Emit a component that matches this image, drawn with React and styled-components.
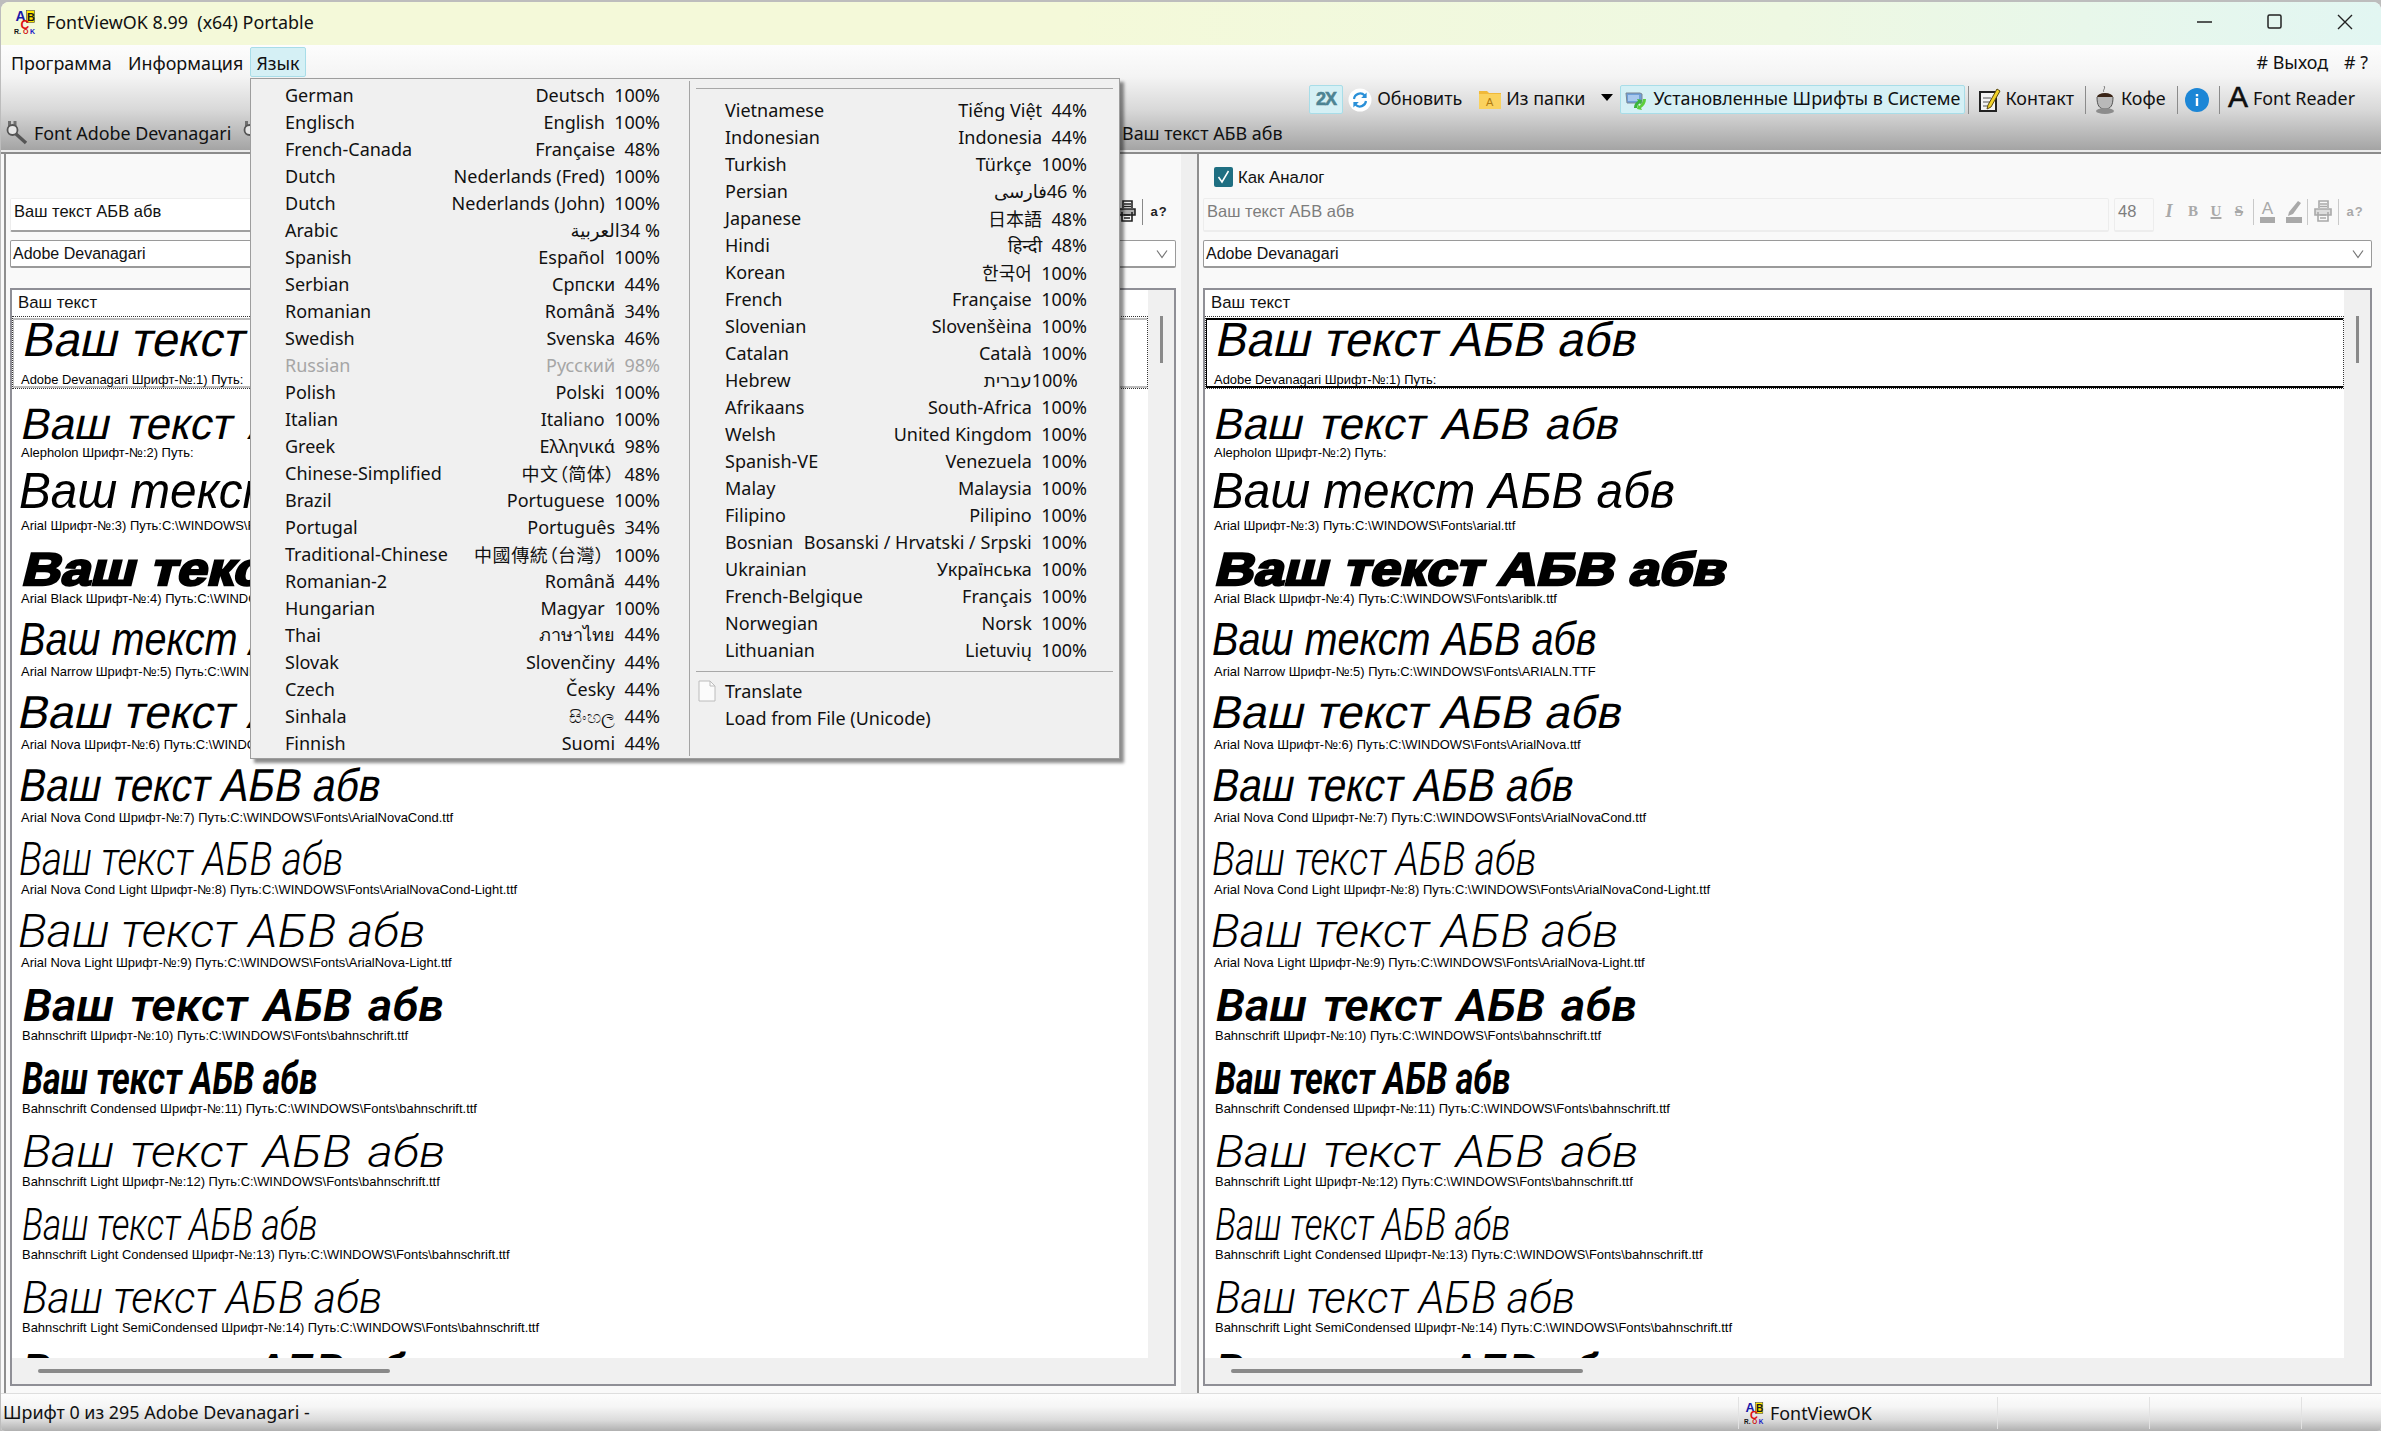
import React from 'react';
import styled, { createGlobalStyle } from 'styled-components';

const UI = '"Noto Sans", "Noto Sans CJK SC", "DejaVu Sans", sans-serif';
const ARIAL = '"Liberation Sans", Arial, sans-serif';

const Global = createGlobalStyle`
  html, body { margin: 0; padding: 0; background: #bdbdbd; overflow: hidden; }
  * { box-sizing: border-box; }
`;

const Screen = styled.div`
  position: relative;
  width: 2381px;
  height: 1431px;
  padding: 2px 0 0 1px;
  background: #bdbdbd;
  overflow: hidden;
  font-family: ${UI};
  color: #111;
`;
const Window = styled.div`
  width: 2380px;
  height: 1429px;
  display: flex;
  flex-direction: column;
  border-radius: 8px 8px 4px 4px;
  overflow: hidden;
  background: #f9f9f9;
`;

/* ---------- Title bar ---------- */
const TitleBar = styled.div`
  flex: 0 0 43px;
  display: flex;
  align-items: center;
  padding: 0 28px 3px 13px;
  background: linear-gradient(90deg, #f4f9d9 0%, #f4f9d9 45%, #eef8e2 75%, #e2f6f2 100%);
`;
const TitleText = styled.div`
  margin-left: 8px;
  font-size: 17.9px;
  white-space: pre;
`;
const WindowButtons = styled.div`
  margin-left: auto;
  display: flex;
  align-items: center;
  gap: 54px;
`;

/* ---------- Top band ---------- */
const TopBand = styled.div`
  flex: 0 0 107px;
  display: flex;
  flex-direction: column;
  background: linear-gradient(180deg, #fdfdfd 0%, #f4f4f4 30%, #d8d8d8 62%, #a4a4a4 100%);
  border-bottom: 2px solid #ececec;
`;
const MenuRow = styled.div`
  flex: 0 0 32px;
  display: flex;
  align-items: flex-start;
  padding: 2px 13px 0 9px;
  font-size: 17.9px;
`;
const MenuItem = styled.div`
  flex: 0 0 ${(p) => p.$w}px;
  height: 30px;
  line-height: 33px;
  padding: 0 1px;
  white-space: pre;
  ${(p) => p.$active && `
    text-align: center;
    background: #d5f0f5;
    border: 1px solid #a8dde8;
    border-radius: 2px;
    line-height: 31px;
  `}
`;
const MenuRight = styled.div`
  margin-left: auto;
  display: flex;
  gap: 16px;
  line-height: 31px;
  white-space: pre;
`;
const Toolbar = styled.div`
  flex: 0 0 29px;
  margin-top: 7px;
  display: flex;
  align-items: center;
  justify-content: flex-end;
  padding-right: 25px;
  font-size: 17.9px;
`;
const ToolItem = styled.div`
  flex: 0 0 ${(p) => p.$w}px;
  height: 29px;
  margin-left: ${(p) => p.$ml || 0}px;
  display: flex;
  align-items: center;
  gap: ${(p) => p.$gap ?? 5}px;
  white-space: pre;
  ${(p) => p.$on && `
    background: #d5f0f5;
    border: 1px solid #a8dde8;
    border-radius: 2px;
    padding-left: ${p.$pad ?? 4}px;
  `}
`;
const ToolLabel = styled.span`
  padding-bottom: 3px;
`;
const DoubleX = styled.span`
  width: 100%;
  text-align: center;
  font: 900 18px ${ARIAL};
  letter-spacing: -1px;
  color: #4d8392;
  -webkit-text-stroke: 0.6px #4d8392;
`;
const ToolSep = styled.div`
  flex: 0 0 1px;
  height: 28px;
  margin-left: ${(p) => p.$ml}px;
  background: #8b8b8b;
`;
const ArrowDown = styled.div`
  width: 0;
  height: 0;
  margin: 0 auto 4px;
  border-left: 6px solid transparent;
  border-right: 6px solid transparent;
  border-top: 7px solid #000;
`;
const BigA = styled.span`
  font: 400 30px/29px ${ARIAL};
  margin-top: -6px;
  -webkit-text-stroke: 0.5px #000;
`;
const TabRow = styled.div`
  flex: 0 0 26px;
  margin-top: 6px;
  display: flex;
  align-items: center;
  padding-left: 5px;
  font-size: 17.9px;
  white-space: pre;
`;
const TabLabel = styled.span`
  flex: 0 0 ${(p) => (p.$w ? `${p.$w}px` : 'auto')};
  margin-left: ${(p) => p.$ml}px;
`;
const TabIcon = styled.span`
  display: flex;
  margin-left: ${(p) => p.$ml || 0}px;
`;

/* ---------- Panes ---------- */
const Panes = styled.div`
  flex: 1;
  min-height: 0;
  display: flex;
  border-top: 2px solid #8c8c8c;
`;
const Pane = styled.div`
  flex: 0 0 auto;
  width: ${(p) => p.$w}px;
  margin-left: ${(p) => p.$ml}px;
  padding: 0 ${(p) => p.$pr}px 7px 4px;
  border-left: 2px solid #8e8e8e;
  display: flex;
  flex-direction: column;
`;
const Splitter = styled.div`
  flex: 0 0 16px;
  background: #efefef;
`;
const CheckRow = styled.div`
  flex: 0 0 44px;
  padding: 13px 0 0 11px;
  display: flex;
  align-items: flex-start;
  gap: 5px;
  font: 16.8px/21px ${ARIAL};
`;
const CheckBox = styled.div`
  width: 19px;
  height: 20px;
  border-radius: 2px;
  background: #1f6f82;
  display: flex;
  align-items: center;
  justify-content: center;
`;
const InputRow = styled.div`
  flex: 0 0 34px;
  display: flex;
  gap: 5px;
`;
const TextField = styled.div`
  flex: 1;
  min-width: 0;
  padding-left: 3px;
  font: 16.5px/24px ${ARIAL};
  white-space: pre;
  color: ${(p) => (p.$off ? '#7d7d7d' : '#111')};
  background: ${(p) => (p.$off ? '#f9f9f9' : '#fff')};
  border: 1px solid #ededed;
  border-bottom: 2px solid ${(p) => (p.$off ? '#ededed' : '#a0a0a0')};
  border-radius: 2px;
`;
const SizeField = styled(TextField)`
  flex: 0 0 40px;
`;
const FontTools = styled.div`
  flex: 0 0 213px;
  display: flex;
  align-items: flex-start;
  padding-top: 1px;
  color: ${(p) => (p.$off ? '#a9a9a9' : '#222')};
`;
const Tool = styled.div`
  flex: 0 0 ${(p) => p.$w}px;
  height: 24px;
  display: flex;
  align-items: center;
  justify-content: center;
  font: 700 15px/24px "Liberation Serif", serif;
`;
const ItalicMark = styled.span`font-style: italic; font-size: 18px;`;
const UnderMark = styled.span`text-decoration: underline; text-decoration-thickness: 2px;`;
const StrikeMark = styled.span`text-decoration: line-through; text-decoration-thickness: 2px;`;
const HelpMark = styled.span`font: 700 13px ${ARIAL}; letter-spacing: 1px;`;
const ToolBar2 = styled.div`
  flex: 0 0 1px;
  height: 26px;
  background: ${(p) => (p.$off ? '#c9c9c9' : '#888')};
`;
const ColorA = styled.span`
  display: flex;
  flex-direction: column;
  align-items: center;
  font: 400 17px/17px ${ARIAL};
  &::after { content: ''; width: 15px; height: 6px; background: currentColor; }
`;
const Combo = styled.div`
  flex: 0 0 28px;
  margin-top: 8px;
  display: flex;
  align-items: center;
  justify-content: space-between;
  padding: 0 6px 0 2px;
  background: #fff;
  border: 1px solid #9a9a9a;
  border-bottom-width: 2px;
  border-radius: 2px;
  font: 16px ${ARIAL};
`;
const FontList = styled.div`
  flex: 1;
  min-height: 0;
  margin-top: 20px;
  display: flex;
  flex-direction: column;
  background: #fff;
  border: 2px solid #8f8f96;
`;
const ListMain = styled.div`
  flex: 1;
  min-height: 0;
  display: flex;
`;
const Rows = styled.div`
  flex: 1;
  min-width: 0;
  overflow: hidden;
`;
const ListHead = styled.div`
  height: 26px;
  padding-left: 6px;
  font: 16.8px/25px ${ARIAL};
`;
const Row = styled.div`
  height: 72.93px;
  border: 1px solid transparent;
  ${(p) => p.$sel && `border: 1px dotted #333;`}
`;
const RowInner = styled.div`
  height: 70px;
  margin-top: 1px;
  border-top: 2px solid ${(p) => p.$bar || 'transparent'};
  border-bottom: 2px solid ${(p) => p.$bar || 'transparent'};
  border-left: 1px solid ${(p) => p.$bar || 'transparent'};
`;
const BigLine = styled.div`
  height: 51px;
  margin-left: ${(p) => p.$x}px;
  white-space: pre;
`;
const BigText = styled.span`
  display: inline-block;
  transform-origin: 0 100%;
  transform: scaleX(${(p) => p.$sx || 1}) skewX(${(p) => p.$skew || 0}deg);
  font-family: ${(p) => p.$fam || ARIAL};
  font-style: ${(p) => (p.$skew ? 'normal' : 'italic')};
  font-weight: ${(p) => p.$wt || 400};
  font-size: ${(p) => p.$fs}px;
  line-height: ${(p) => 2 * (p.$y - 0.3465 * p.$fs)}px;
  word-spacing: ${(p) => p.$ws || 0}px;
  color: #000;
  ${(p) => p.$stroke && `-webkit-text-stroke: ${p.$stroke}px #000;`}
`;
const SubText = styled.div`
  height: 15px;
  margin-left: ${(p) => p.$x}px;
  font: 12.95px/18px ${ARIAL};
  white-space: pre;
  color: #000;
`;
const VTrack = styled.div`
  flex: 0 0 26px;
  padding: 26px 0 0 12px;
  background: #f0f0f0;
`;
const VThumb = styled.div`
  width: 3px;
  height: 47px;
  background: #8a8a8a;
`;
const HTrack = styled.div`
  flex: 0 0 26px;
  display: flex;
  align-items: center;
  padding-left: 26px;
  background: #f0f0f0;
`;
const HThumb = styled.div`
  width: 352px;
  height: 4px;
  border-radius: 2px;
  background: #8a8a8a;
`;

/* ---------- Status bar ---------- */
const StatusBar = styled.div`
  flex: 0 0 38px;
  display: flex;
  align-items: center;
  background: linear-gradient(180deg, #fdfdfd 0%, #f5f5f5 35%, #dcdcdc 70%, #b0b0b0 100%);
  border-top: 1px solid #dedede;
  font-size: 17.9px;
  white-space: pre;
`;
const StatusText = styled.div`
  flex: 1;
  padding: 0 0 2px 2px;
`;
const StatusCell = styled.div`
  flex: 0 0 ${(p) => p.$w}px;
  height: 32px;
  display: flex;
  align-items: center;
  gap: 4px;
  padding-left: 5px;
  border-left: 1px solid #e2e2e2;
`;

/* ---------- Language menu ---------- */
const LangMenu = styled.div`
  position: absolute;
  left: 250px;
  top: 78px;
  width: 870px;
  height: 681px;
  display: flex;
  background: #f0f0f0;
  border: 1px solid #9d9d9d;
  box-shadow: 4px 4px 3px rgba(0, 0, 0, 0.45);
  font-size: 18px;
`;
const LeftColumn = styled.div`
  flex: 0 0 439px;
  margin: 2px 0;
  padding: 0 29px 0 34px;
  border-right: 1px solid #a4a4a4;
`;
const RightColumn = styled.div`
  flex: 1;
  padding-top: 9px;
`;
const MenuSep = styled.div`
  height: 1px;
  margin: ${(p) => p.$mt || 0}px 6px ${(p) => p.$mb || 0}px;
  background: #a8a8a8;
`;
const LangRows = styled.div`
  padding: 7px 32px 0 35px;
`;
const LangRow = styled.div`
  height: 27px;
  display: flex;
  justify-content: space-between;
  align-items: center;
  white-space: pre;
  color: ${(p) => (p.$dis ? '#a6a6a6' : '#111')};
`;
const NativeName = styled.bdi`
  font-feature-settings: "palt";
  letter-spacing: ${(p) => (p.$cjk ? '0.6px' : '0')};
`;
const Plain = styled.div`
  position: relative;
  height: 27px;
  line-height: 27px;
  padding-left: 35px;
`;
const DocSlot = styled.div`
  position: absolute;
  left: 8px;
  top: 2px;
`;

/* ---------- Icons ---------- */
const Logo = ({ size = 24 }) => (
  <svg width={size} height={size} viewBox="0 0 24 24" style={{ flex: 'none' }}>
    <rect x="12.5" y="0.5" width="8" height="12" fill="#ffe800" stroke="#444" strokeWidth="0.6" />
    <text x="1.5" y="11" fontFamily="Liberation Sans" fontWeight="700" fontSize="14" fill="#1818a8">A</text>
    <text x="13" y="11" fontFamily="Liberation Sans" fontWeight="700" fontSize="11" fill="#1a1a1a">B</text>
    <text x="6.5" y="18.5" fontFamily="Liberation Sans" fontWeight="700" fontSize="12" fill="#e01010">C</text>
    <text x="0" y="23.5" fontFamily="Liberation Sans" fontWeight="700" fontSize="7" fill="#111">R.</text>
    <text x="9" y="23.5" fontFamily="Liberation Sans" fontWeight="700" fontSize="7" fill="#d01010">O</text>
    <text x="16" y="23.5" fontFamily="Liberation Sans" fontWeight="700" fontSize="7" fill="#1818c8">K</text>
  </svg>
);
const Refresh = () => (
  <svg width="24" height="24" viewBox="0 0 24 24" style={{ flex: 'none' }}>
    <circle cx="12" cy="12" r="11.5" fill="#fff" />
    <path d="M6 11a6.2 6.2 0 0 1 10.6-3.6" fill="none" stroke="#2a90d8" strokeWidth="2.2" />
    <path d="M18.6 4.5v5.4h-5.4z" fill="#2a90d8" />
    <path d="M18 13a6.2 6.2 0 0 1-10.6 3.6" fill="none" stroke="#2a90d8" strokeWidth="2.2" />
    <path d="M5.4 19.5v-5.4h5.4z" fill="#2a90d8" />
  </svg>
);
const Folder = () => (
  <svg width="22" height="22" viewBox="0 0 22 22" style={{ flex: 'none' }}>
    <path d="M0 2h8l2 2h12v15H0z" fill="#f0b93a" />
    <rect x="0" y="5" width="22" height="15" fill="#fad25e" />
    <text x="7" y="17" fontFamily="Liberation Sans" fontSize="11" fill="#b07a10">A</text>
  </svg>
);
const Installed = () => (
  <svg width="23" height="22" viewBox="0 0 23 22" style={{ flex: 'none' }}>
    <path d="M1 4h14l2 1v9H2z" fill="#6f9fd8" stroke="#7d8794" />
    <path d="M3 6h11v6H3z" fill="#a8c8ee" />
    <path d="M9 19c0-4 2-6 4-7l-1-2 5 1-1 5-1-2c-2 1-3 3-3 5z" fill="#3cb43c" />
    <path d="M21 10c0 4-2 7-5 9l1 2-5-1 1-5 1 2c2-1 4-4 4-7z" fill="#5ccf3a" />
  </svg>
);
const Contact = () => (
  <svg width="22" height="26" viewBox="0 0 22 26" style={{ flex: 'none' }}>
    <rect x="1" y="5" width="16" height="19" fill="#f4f4f4" stroke="#222" strokeWidth="2" />
    <path d="M4 11h8M4 15h8M4 19h8" stroke="#555" />
    <path d="M9 18L18 2l3 2-9 16-4 2z" fill="#f2d22a" stroke="#5a4a10" />
  </svg>
);
const Coffee = () => (
  <svg width="20" height="30" viewBox="0 0 20 30" style={{ flex: 'none' }}>
    <ellipse cx="10" cy="12" rx="8" ry="4" fill="#3a2416" />
    <path d="M2 12c0 8 2 12 8 12s8-4 8-12" fill="#b9b9b9" stroke="#555" />
    <ellipse cx="10" cy="26" rx="9" ry="3" fill="#8c8c8c" />
    <path d="M9 7c-2-2 2-3 0-6" fill="none" stroke="#777" />
  </svg>
);
const Info = () => (
  <svg width="24" height="24" viewBox="0 0 24 24" style={{ flex: 'none' }}>
    <circle cx="12" cy="12" r="12" fill="#1c86d6" />
    <rect x="10.8" y="10" width="2.4" height="8" fill="#fff" />
    <rect x="10.8" y="6" width="2.4" height="2.4" fill="#fff" />
  </svg>
);
const Magnifier = () => (
  <svg width="23" height="24" viewBox="0 0 23 24" style={{ flex: 'none' }}>
    <path d="M2 0h3v6H2zM7.5 0h3v6h-3z" fill="#6f6f6f" />
    <circle cx="6.5" cy="9" r="5" fill="#e6e6e6" stroke="#555" strokeWidth="1.8" />
    <path d="M10 13l10 9" stroke="#555" strokeWidth="3.4" />
  </svg>
);
const Pen = () => (
  <svg width="20" height="24" viewBox="0 0 20 24">
    <path d="M5 13L14 2l3 2-8 11-5 2z" fill="currentColor" />
    <rect x="2" y="18" width="16" height="6" fill="currentColor" />
  </svg>
);
const Printer = () => (
  <svg width="20" height="24" viewBox="0 0 20 24" fill="none" stroke="currentColor" strokeWidth="1.6">
    <path d="M6 9V2h9l0 7" />
    <path d="M7 5h7M7 7.5h7" />
    <path d="M2 16V10h16v6z" fill="currentColor" fillOpacity="0.35" />
    <path d="M5 13v9h10v-9M7 16h6M7 19h6" />
  </svg>
);
const Chevron = () => (
  <svg width="14" height="10" viewBox="0 0 14 10" fill="none" stroke="#777" strokeWidth="1.2">
    <path d="M2 1.5l5 7 5-7" />
  </svg>
);
const Tick = () => (
  <svg width="13" height="14" viewBox="0 0 13 14" fill="none" stroke="#fff" strokeWidth="1.5">
    <path d="M1.5 7l3.5 5 6.5-11" />
  </svg>
);
const Doc = () => (
  <svg width="18" height="22" viewBox="0 0 18 22" fill="#fbfbfb" stroke="#bcbcbc">
    <path d="M1 1h11l5 5v15H1z" />
    <path d="M12 1v5h5" fill="none" />
  </svg>
);

/* ---------- Data ---------- */
const SAMPLE = 'Ваш текст АБВ абв';
const RB = 'Roboto, sans-serif';
const FONTS = [
  { sub: 'Adobe Devanagari Шрифт-№:1) Путь:', fs: 48, y: 37, x: 6, sx: 0.982, skew: -12 },
  { sub: 'Alepholon Шрифт-№:2) Путь:', fs: 44, y: 46, x: 2, ws: 4, skew: -12 },
  { sub: 'Arial Шрифт-№:3) Путь:C:\\WINDOWS\\Fonts\\arial.ttf', fs: 50, y: 43, x: 5, sx: 0.955 },
  { sub: 'Arial Black Шрифт-№:4) Путь:C:\\WINDOWS\\Fonts\\ariblk.ttf', fs: 46, y: 46, x: 3, wt: 700, stroke: 2.4, sx: 1.171, skew: -12 },
  { sub: 'Arial Narrow Шрифт-№:5) Путь:C:\\WINDOWS\\Fonts\\ARIALN.TTF', fs: 46, y: 43, x: 5, sx: 0.862 },
  { sub: 'Arial Nova Шрифт-№:6) Путь:C:\\WINDOWS\\Fonts\\ArialNova.ttf', fs: 46, y: 43, x: 0, skew: -12 },
  { sub: 'Arial Nova Cond Шрифт-№:7) Путь:C:\\WINDOWS\\Fonts\\ArialNovaCond.ttf', fs: 46, y: 43.5, x: 1, sx: 0.88, skew: -12 },
  { sub: 'Arial Nova Cond Light Шрифт-№:8) Путь:C:\\WINDOWS\\Fonts\\ArialNovaCond-Light.ttf', fs: 46, y: 45, x: 5, sx: 0.84, wt: 300, fam: RB },
  { sub: 'Arial Nova Light Шрифт-№:9) Путь:C:\\WINDOWS\\Fonts\\ArialNova-Light.ttf', fs: 46, y: 44, x: 4, sx: 1.055, wt: 300, fam: RB },
  { sub: 'Bahnschrift Шрифт-№:10) Путь:C:\\WINDOWS\\Fonts\\bahnschrift.ttf', fs: 44, y: 46, x: 9, sx: 1.07, wt: 600, ws: 4, fam: RB, s2: 8 },
  { sub: 'Bahnschrift Condensed Шрифт-№:11) Путь:C:\\WINDOWS\\Fonts\\bahnschrift.ttf', fs: 44, y: 46, x: 8, wt: 700, sx: 0.772, fam: RB, s2: 8 },
  { sub: 'Bahnschrift Light Шрифт-№:12) Путь:C:\\WINDOWS\\Fonts\\bahnschrift.ttf', fs: 44, y: 46, x: 8, sx: 1.11, wt: 300, ws: 4, fam: RB, s2: 8 },
  { sub: 'Bahnschrift Light Condensed Шрифт-№:13) Путь:C:\\WINDOWS\\Fonts\\bahnschrift.ttf', fs: 44, y: 46, x: 8, wt: 300, sx: 0.8, fam: RB, s2: 8 },
  { sub: 'Bahnschrift Light SemiCondensed Шрифт-№:14) Путь:C:\\WINDOWS\\Fonts\\bahnschrift.ttf', fs: 44, y: 46, x: 8, wt: 300, sx: 0.975, fam: RB, s2: 8 },
  { sub: '', fs: 44, y: 46, x: 8, sx: 1.07, wt: 700, fam: RB, s2: 8 },
];

const L = (n, native, pct, extra) => ({ n, native, pct, ...extra });
const COL1 = [
  L('German', 'Deutsch', '100%'),
  L('Englisch', 'English', '100%'),
  L('French-Canada', 'Française', '48%'),
  L('Dutch', 'Nederlands (Fred)', '100%'),
  L('Dutch', 'Nederlands (John)', '100%'),
  L('Arabic', 'العربية', '34 %', { sep: '' }),
  L('Spanish', 'Español', '100%'),
  L('Serbian', 'Српски', '44%'),
  L('Romanian', 'Română', '34%'),
  L('Swedish', 'Svenska', '46%'),
  L('Russian', 'Русский', '98%', { dis: true }),
  L('Polish', 'Polski', '100%'),
  L('Italian', 'Italiano', '100%'),
  L('Greek', 'Ελληνικά', '98%'),
  L('Chinese-Simplified', '中文（简体）', '48%', { cjk: true }),
  L('Brazil', 'Portuguese', '100%'),
  L('Portugal', 'Português', '34%'),
  L('Traditional-Chinese', '中國傳統（台灣）', '100%', { cjk: true }),
  L('Romanian-2', 'Română', '44%'),
  L('Hungarian', 'Magyar', '100%'),
  L('Thai', 'ภาษาไทย', '44%'),
  L('Slovak', 'Slovenčiny', '44%'),
  L('Czech', 'Česky', '44%'),
  L('Sinhala', 'සිංහල', '44%'),
  L('Finnish', 'Suomi', '44%'),
];
const COL2 = [
  L('Vietnamese', 'Tiếng Việt', '44%'),
  L('Indonesian', 'Indonesia', '44%'),
  L('Turkish', 'Türkçe', '100%'),
  L('Persian', 'فارسی', '46 %', { sep: '' }),
  L('Japanese', '日本語', '48%'),
  L('Hindi', 'हिन्दी', '48%'),
  L('Korean', '한국어', '100%'),
  L('French', 'Française', '100%'),
  L('Slovenian', 'Slovenšèina', '100%'),
  L('Catalan', 'Català', '100%'),
  L('Hebrew', 'עברית', '100%  ', { sep: '' }),
  L('Afrikaans', 'South-Africa', '100%'),
  L('Welsh', 'United Kingdom', '100%'),
  L('Spanish-VE', 'Venezuela', '100%'),
  L('Malay', 'Malaysia', '100%'),
  L('Filipino', 'Pilipino', '100%'),
  L('Bosnian', 'Bosanski / Hrvatski / Srpski', '100%'),
  L('Ukrainian', 'Українська', '100%'),
  L('French-Belgique', 'Français', '100%'),
  L('Norwegian', 'Norsk', '100%'),
  L('Lithuanian', 'Lietuvių', '100%'),
];

const LangLine = ({ l }) => (
  <LangRow $dis={l.dis}>
    <span>{l.n}</span>
    <span>
      <NativeName $cjk={l.cjk}>{l.native}</NativeName>
      {l.sep ?? '  '}
      {l.pct}
    </span>
  </LangRow>
);

const FontRow = ({ f, bar, sel }) => (
  <Row $sel={sel}>
    <RowInner $bar={bar}>
      <BigLine $x={f.x}>
        <BigText $fs={f.fs} $y={f.y} $sx={f.sx} $wt={f.wt} $ws={f.ws} $stroke={f.stroke} $fam={f.fam} $skew={f.skew}>
          {SAMPLE}
        </BigText>
      </BigLine>
      <SubText $x={f.s2 || 7}>{f.sub}</SubText>
    </RowInner>
  </Row>
);

const FontPane = ({ w, ml, pr, barColor, off, check }) => (
  <Pane $w={w} $ml={ml} $pr={pr}>
    <CheckRow>
      {check && (
        <>
          <CheckBox><Tick /></CheckBox>
          <span>Как Аналог</span>
        </>
      )}
    </CheckRow>
    <InputRow>
      <TextField $off={off}>{SAMPLE}</TextField>
      <SizeField $off={off}>48</SizeField>
      <FontTools $off={off}>
        <Tool $w={20}><ItalicMark>I</ItalicMark></Tool>
        <Tool $w={28}>B</Tool>
        <Tool $w={18}><UnderMark>U</UnderMark></Tool>
        <Tool $w={28}><StrikeMark>S</StrikeMark></Tool>
        <ToolBar2 $off={off} />
        <Tool $w={27}><ColorA>A</ColorA></Tool>
        <Tool $w={26}><Pen /></Tool>
        <ToolBar2 $off={off} />
        <Tool $w={30}><Printer /></Tool>
        <ToolBar2 $off={off} />
        <Tool $w={32}><HelpMark>a?</HelpMark></Tool>
      </FontTools>
    </InputRow>
    <Combo>
      <span>Adobe Devanagari</span>
      <Chevron />
    </Combo>
    <FontList>
      <ListMain>
        <Rows>
          <ListHead>Ваш текст</ListHead>
          {FONTS.map((f, i) => (
            <FontRow key={i} f={f} sel={i === 0} bar={i === 0 ? barColor : undefined} />
          ))}
        </Rows>
        <VTrack><VThumb /></VTrack>
      </ListMain>
      <HTrack><HThumb /></HTrack>
    </FontList>
  </Pane>
);

export default function App() {
  return (
    <Screen>
      <Global />
      <Window>
        <TitleBar>
          <Logo />
          <TitleText>FontViewOK 8.99  (x64) Portable</TitleText>
          <WindowButtons>
            <svg width="16" height="16" viewBox="0 0 16 16"><path d="M0 8h15" stroke="#222" strokeWidth="1.5" /></svg>
            <svg width="16" height="16" viewBox="0 0 16 16" fill="none"><rect x="1" y="1" width="13" height="13" rx="1.5" stroke="#222" strokeWidth="1.5" /></svg>
            <svg width="16" height="16" viewBox="0 0 16 16"><path d="M1 1l14 14M15 1L1 15" stroke="#222" strokeWidth="1.4" /></svg>
          </WindowButtons>
        </TitleBar>

        <TopBand>
          <MenuRow>
            <MenuItem $w={117}>Программа</MenuItem>
            <MenuItem $w={123}>Информация</MenuItem>
            <MenuItem $w={56} $active>Язык</MenuItem>
            <MenuRight>
              <span># Выход</span>
              <span># ?</span>
            </MenuRight>
          </MenuRow>

          <Toolbar>
            <ToolItem $w={34} $on $pad={0}><DoubleX>2X</DoubleX></ToolItem>
            <ToolItem $w={112} $ml={5}><Refresh /><ToolLabel>Обновить</ToolLabel></ToolItem>
            <ToolItem $w={106} $ml={17}><Folder /><ToolLabel>Из папки</ToolLabel></ToolItem>
            <ToolItem $w={14} $ml={15}><ArrowDown /></ToolItem>
            <ToolItem $w={345} $ml={6} $on><Installed /><ToolLabel>Установленные Шрифты в Системе</ToolLabel></ToolItem>
            <ToolSep $ml={3} />
            <ToolItem $w={94} $ml={10} $gap={4}><Contact /><ToolLabel>Контакт</ToolLabel></ToolItem>
            <ToolSep $ml={11} />
            <ToolItem $w={72} $ml={9} $gap={6}><Coffee /><ToolLabel>Кофе</ToolLabel></ToolItem>
            <ToolSep $ml={10} />
            <ToolItem $w={24} $ml={7}><Info /></ToolItem>
            <ToolSep $ml={10} />
            <ToolItem $w={128} $ml={8}><BigA>A</BigA><ToolLabel>Font Reader</ToolLabel></ToolItem>
          </Toolbar>

          <TabRow>
            <TabIcon><Magnifier /></TabIcon>
            <TabLabel $ml={5} $w={198}>Font Adobe Devanagari</TabLabel>
            <TabIcon $ml={11}><Magnifier /></TabIcon>
            <TabLabel $ml={856}>{SAMPLE}</TabLabel>
          </TabRow>
        </TopBand>

        <Panes>
          <FontPane w={1177} ml={3} pr={5} barColor="#bdbdbd" />
          <Splitter />
          <FontPane w={1184} ml={0} pr={9} barColor="#000" off check />
        </Panes>

        <StatusBar>
          <StatusText>Шрифт 0 из 295 Adobe Devanagari -</StatusText>
          <StatusCell $w={259}><Logo size={22} /><span>FontViewOK</span></StatusCell>
          <StatusCell $w={152} />
          <StatusCell $w={152} />
          <StatusCell $w={80} />
        </StatusBar>
      </Window>

      <LangMenu>
        <LeftColumn>
          {COL1.map((l, i) => <LangLine key={i} l={l} />)}
        </LeftColumn>
        <RightColumn>
          <MenuSep />
          <LangRows>
            {COL2.map((l, i) => <LangLine key={i} l={l} />)}
          </LangRows>
          <MenuSep $mt={7.5} $mb={6} />
          <Plain><DocSlot><Doc /></DocSlot>Translate</Plain>
          <Plain>Load from File (Unicode)</Plain>
        </RightColumn>
      </LangMenu>
    </Screen>
  );
}
